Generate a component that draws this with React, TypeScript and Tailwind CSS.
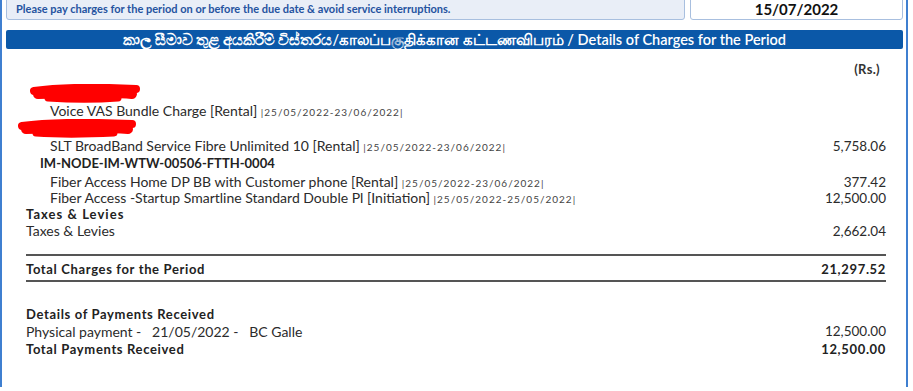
const font = { fontFamily: 'Lato, "Noto Sans", sans-serif' }

type Line = {
    label: string
    period?: string
    amount?: string
    indent?: boolean
}

const charges: Line[] = [
    { label: 'Fiber Access Home DP BB with Customer phone [Rental]', period: '|25/05/2022-23/06/2022|', amount: '377.42', indent: true },
    { label: 'Fiber Access -Startup Smartline Standard Double Pl [Initiation]', period: '|25/05/2022-25/05/2022|', amount: '12,500.00', indent: true },
]

function Row({ label, period, amount, indent }: Line) {
    return (
        <div className="flex items-center justify-between h-4 leading-4 text-[14px] text-[#2b2b2b]">
            <div className={indent ? 'pl-6' : ''}>
                {label}
                {period && <span className="text-[10px] tracking-[1px] text-[#444]"> {period}</span>}
            </div>
            {amount && <div className="text-[13.5px]">{amount}</div>}
        </div>
    )
}

// red marker strokes that hide the account lines
function Scribble({ width }: { width: number }) {
    const w = width
    return (
        <svg width={w} height="20" viewBox={`0 0 ${w} 20`} className="absolute">
            <g stroke="#ff0000" strokeLinecap="round" fill="none">
                <path d={`M8 7 C 30 4, 70 3, ${w - 8} 5`} strokeWidth="8" />
                <path d={`M12 10 C 50 9, 90 8, ${w - 12} 10`} strokeWidth="10" />
                <path d={`M22 14 C 50 16, 80 15, ${w - 26} 14`} strokeWidth="7" />
            </g>
        </svg>
    )
}

export default function App() {
    return (
        <div className="w-[913px] h-[391px] bg-white overflow-hidden" style={font}>
            <div className="h-full w-[908px] border-l-2 border-r-2 border-[#3f7fd0] pl-[4px] pr-[3px]">
                <div className="flex gap-[5px] -mt-[4px]">
                    <div className="w-[679px] h-[24px] bg-[#e9eef7] border border-[#a8bfdf] rounded-b-[3px] flex items-center pl-[9px] pt-[3px]">
                        <span className="text-[11px] font-bold text-[#2553a0]">
                            Please pay charges for the period on or before the due date &amp; avoid service interruptions.
                        </span>
                    </div>
                    <div className="flex-1 h-[24px] bg-white border border-[#a8bfdf] rounded-b-[3px] flex items-center justify-center pt-[3px]">
                        <span className="text-[15px] font-bold text-[#111]">15/07/2022</span>
                    </div>
                </div>

                <div className="mt-[10px] h-[19px] bg-[#0b58a8] rounded-[2px] flex items-center justify-center text-white text-[14.5px] font-semibold">
                    කාල සීමාව තුළ අයකිරීම් විස්තරය/காலப்பகுதிக்கான கட்டணவிபரம் / Details of Charges for the Period
                </div>

                <div className="pl-[20px] pr-[17px]">
                    <div className="flex justify-end mt-[12px] h-4 leading-4 text-[13px] font-bold text-[#333] tracking-wide">
                        <span className="pr-[6px]">(Rs.)</span>
                    </div>

                    <div className="relative h-4 mt-[9px]">
                        <div className="absolute left-[0px] -top-[2px]">
                            <Scribble width={118} />
                        </div>
                    </div>
                    <div className="mt-[1px]">
                        <Row label="Voice VAS Bundle Charge [Rental]" period="|25/05/2022-23/06/2022|" indent />
                    </div>
                    <div className="relative h-4">
                        <div className="absolute -left-[12px] top-[0px]">
                            <Scribble width={126} />
                        </div>
                    </div>
                    <div className="mt-[3px]">
                        <Row label="SLT BroadBand Service Fibre Unlimited 10 [Rental]" period="|25/05/2022-23/06/2022|" amount="5,758.06" indent />
                    </div>
                    <div className="h-4 leading-4 mt-[1px] pl-[14px] text-[13px] font-bold text-[#222] flex items-center">
                        IM-NODE-IM-WTW-00506-FTTH-0004
                    </div>

                    <div className="mt-[3px]">
                        {charges.map((c, i) => (
                            <Row key={i} {...c} />
                        ))}
                    </div>

                    <div className="h-4 leading-4 text-[13px] font-bold text-[#222] tracking-[0.08em] flex items-center">Taxes &amp; Levies</div>
                    <div className="mt-[1px]">
                        <Row label="Taxes & Levies" amount="2,662.04" />
                    </div>

                    <div className="mt-[15px] border-t-2 border-[#555]" />
                    <div className="h-[24px] pt-[3px] flex items-center justify-between text-[13px] font-bold text-[#222] tracking-[0.05em]">
                        <span>Total Charges for the Period</span>
                        <span>21,297.52</span>
                    </div>
                    <div className="border-t-2 border-[#555]" />

                    <div className="mt-[24px] h-4 leading-4 text-[13px] font-bold text-[#222] tracking-[0.05em] flex items-center">
                        Details of Payments Received
                    </div>
                    <div className="flex items-center justify-between h-[18px] text-[14px] text-[#2b2b2b]">
                        <span className="whitespace-pre">Physical payment -   21/05/2022 -   BC Galle</span>
                        <span className="text-[13.5px]">12,500.00</span>
                    </div>
                    <div className="flex items-center justify-between h-5 text-[13px] font-bold text-[#222] tracking-[0.05em]">
                        <span>Total Payments Received</span>
                        <span>12,500.00</span>
                    </div>
                </div>
            </div>
        </div>
    )
}
